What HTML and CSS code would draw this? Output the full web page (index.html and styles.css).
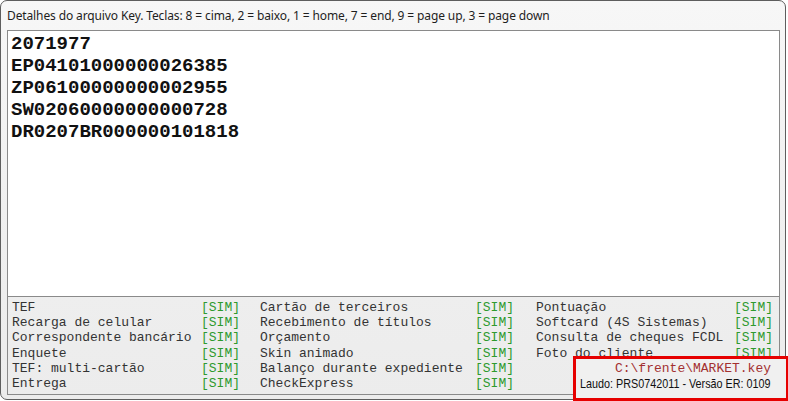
FILE: index.html
```html
<!DOCTYPE html>
<html lang="pt-BR">
<head>
    <meta charset="UTF-8">
    <title>Detalhes do arquivo Key</title>
    <link rel="stylesheet" href="styles.css">
</head>
<body>
    <div class="window">
        <div class="caption">Detalhes do arquivo Key. Teclas: 8 = cima, 2 = baixo, 1 = home, 7 = end, 9 = page up, 3 = page down</div>

        <div class="key-box">
            <div>2071977</div>
            <div>EP04101000000026385</div>
            <div>ZP06100000000002955</div>
            <div>SW02060000000000728</div>
            <div>DR0207BR000000101818</div>
        </div>

        <div class="modules">
            <div class="col col-1">
                <div class="row"><span>TEF</span><span class="sim">[SIM]</span></div>
                <div class="row"><span>Recarga de celular</span><span class="sim">[SIM]</span></div>
                <div class="row"><span>Correspondente bancário</span><span class="sim">[SIM]</span></div>
                <div class="row"><span>Enquete</span><span class="sim">[SIM]</span></div>
                <div class="row"><span>TEF: multi-cartão</span><span class="sim">[SIM]</span></div>
                <div class="row"><span>Entrega</span><span class="sim">[SIM]</span></div>
            </div>
            <div class="col col-2">
                <div class="row"><span>Cartão de terceiros</span><span class="sim">[SIM]</span></div>
                <div class="row"><span>Recebimento de títulos</span><span class="sim">[SIM]</span></div>
                <div class="row"><span>Orçamento</span><span class="sim">[SIM]</span></div>
                <div class="row"><span>Skin animado</span><span class="sim">[SIM]</span></div>
                <div class="row"><span>Balanço durante expediente</span><span class="sim">[SIM]</span></div>
                <div class="row"><span>CheckExpress</span><span class="sim">[SIM]</span></div>
            </div>
            <div class="col col-3">
                <div class="row"><span>Pontuação</span><span class="sim">[SIM]</span></div>
                <div class="row"><span>Softcard (4S Sistemas)</span><span class="sim">[SIM]</span></div>
                <div class="row"><span>Consulta de cheques FCDL</span><span class="sim">[SIM]</span></div>
                <div class="row"><span>Foto do cliente</span><span class="sim">[SIM]</span></div>
            </div>
        </div>

        <div class="file-info">
            <div class="file-path">C:\frente\MARKET.key</div>
            <div class="laudo"><span>Laudo: PRS0742011 - Versão ER: 0109</span></div>
        </div>
    </div>
</body>
</html>
```

FILE: styles.css
```css
* {
    margin: 0;
    padding: 0;
    box-sizing: border-box;
}

body {
    background: #ffffff;
    width: 788px;
    height: 401px;
    overflow: hidden;
}

.window {
    position: relative;
    width: 786px;
    height: 400px;
    border: 1px solid #5e5e5e;
    border-radius: 7px 7px 0 7px;
    background: linear-gradient(to bottom, #f7f7f7, #efefef 60%, #ececec);
    padding: 0 6px 0 6px;
}

.caption {
    height: 29px;
    padding-top: 7px;
    font-family: "Noto Sans", "Open Sans", sans-serif;
    font-size: 12px;
    letter-spacing: -0.12px;
    line-height: 16px;
    color: #1e1e1e;
    white-space: nowrap;
}

.key-box {
    height: 267px;
    width: 773px;
    background: #ffffff;
    border: 1px solid #8a8a8a;
    padding: 2px 3px;
    font-family: "Liberation Mono", "Courier New", monospace;
    font-weight: bold;
    font-size: 19px;
    line-height: 22px;
    color: #111;
}

.modules {
    display: flex;
    height: 98px;
    width: 773px;
    border: 1px solid #8a8a8a;
    border-top: none;
    padding: 3px 0 0 4px;
    font-family: "Liberation Mono", "Courier New", monospace;
    font-size: 13px;
    line-height: 15.2px;
    color: #333;
}

.col-1 {
    width: 228px;
    margin-right: 20px;
}

.col-2 {
    width: 254px;
    margin-right: 22px;
}

.col-3 {
    width: 237px;
}

.row {
    display: flex;
    justify-content: space-between;
    white-space: pre;
}

.sim {
    color: #2e9a2e;
}

/* highlight around the key file details */
.file-info {
    position: absolute;
    left: 572px;
    top: 355px;
    width: 217px;
    height: 45px;
    border: 3px solid #e60000;
    border-right-width: 4px;
    background: #f0f0f0;
    padding: 2px 15px 0 0;
    text-align: right;
}

.file-path {
    font-family: "Liberation Mono", "Courier New", monospace;
    font-size: 13px;
    line-height: 15px;
    color: #a33030;
}

.laudo {
    display: flex;
    justify-content: flex-end;
    white-space: nowrap;
    font-family: "Liberation Sans", "Arial", sans-serif;
    font-size: 13px;
    line-height: 16px;
    color: #111;
}

/* narrow face for the version line */
.laudo span {
    flex-shrink: 0;
    transform: scaleX(0.83);
    transform-origin: right center;
}
```
